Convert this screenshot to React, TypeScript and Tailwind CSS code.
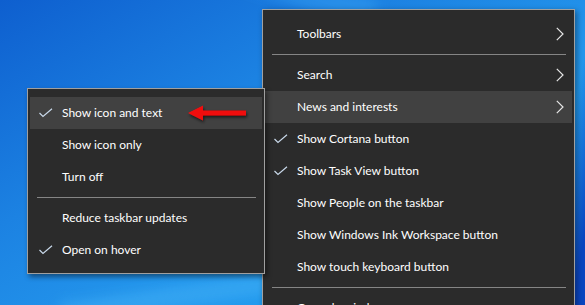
import clsx from "clsx";

type Entry = { label: string; checked?: boolean; arrow?: boolean; active?: boolean } | "sep";

const taskbarMenu: Entry[] = [
  { label: "Toolbars", arrow: true },
  "sep",
  { label: "Search", arrow: true },
  { label: "News and interests", arrow: true, active: true },
  { label: "Show Cortana button", checked: true },
  { label: "Show Task View button", checked: true },
  { label: "Show People on the taskbar" },
  { label: "Show Windows Ink Workspace button" },
  { label: "Show touch keyboard button" },
  "sep",
  { label: "Cascade windows" },
];

const newsMenu: Entry[] = [
  { label: "Show icon and text", checked: true, active: true },
  { label: "Show icon only" },
  { label: "Turn off" },
  "sep",
  { label: "Reduce taskbar updates" },
  { label: "Open on hover", checked: true },
];

function Check() {
  return (
    <svg width="14" height="10" viewBox="0 0 14 10" className="ml-[9px]">
      <path d="M0.5 5 L4 8.5 L13 0.8" fill="none" stroke="#c9d9ea" strokeWidth="1.2" />
    </svg>
  );
}

function Chevron() {
  return (
    <svg width="8" height="14" viewBox="0 0 8 14" className="ml-auto mr-[8px]">
      <path d="M0.8 0.8 L7 7 L0.8 13.2" fill="none" stroke="#e6e6e6" strokeWidth="1.2" />
    </svg>
  );
}

function Menu({ items }: { items: Entry[] }) {
  return (
    <div className="flex flex-col pt-[8px] pb-[7px]">
      {items.map((it, i) =>
        it === "sep" ? (
          <div key={i} className="flex h-[9px] shrink-0 items-center pl-[9px] pr-[8px]">
            <div className="h-px w-full bg-[#858585]" />
          </div>
        ) : (
          <div
            key={i}
            className={clsx("mx-[2px] flex h-8 shrink-0 items-center", it.active && "bg-[#414141]")}
          >
            <span className="flex w-[32px] shrink-0 items-center">{it.checked && <Check />}</span>
            <span className="whitespace-nowrap">{it.label}</span>
            {it.arrow && <Chevron />}
          </div>
        )
      )}
    </div>
  );
}

export default function App() {
  return (
    <div
      className="relative h-[305px] w-[585px] overflow-hidden bg-[linear-gradient(100deg,transparent_93%,#0a45c0_98%),linear-gradient(150deg,#0e5fcf_0%,#1c82e2_35%,#2396ec_60%,#1ba2f2_100%)] text-[12px] text-white"
      style={{ fontFamily: 'Lato, "Noto Sans", sans-serif' }}
    >
      {/* light beams on the wallpaper */}
      <div className="absolute left-[120px] top-[-40px] h-[30px] w-[260px] rotate-[18deg] bg-[#3aa6f5]/40 blur-[6px]" />
      <div className="absolute left-[60px] top-[285px] h-[20px] w-[260px] rotate-[-8deg] bg-[#4ab6f8]/40 blur-[6px]" />

      <div className="absolute left-[262px] top-[9px] h-[320px] w-[313px] border border-[#a0a0a0] bg-[#2b2b2b] shadow-[2px_2px_6px_rgba(0,0,0,0.4)]">
        <Menu items={taskbarMenu} />
      </div>

      <div className="absolute left-[27px] top-[88px] w-[238px] border border-[#a0a0a0] bg-[#2b2b2b] shadow-[2px_3px_5px_rgba(0,0,0,0.45)]">
        <Menu items={newsMenu} />
        {/* red arrow pointing at the highlighted option */}
        <svg width="64" height="24" viewBox="0 0 64 24" className="absolute left-[158px] top-[12px]">
          <defs>
            <filter id="sh" x="-20%" y="-50%" width="140%" height="200%">
              <feDropShadow dx="1" dy="2" stdDeviation="1.5" floodColor="#000" floodOpacity="0.6" />
            </filter>
          </defs>
          <path d="M2 12 L17 4.5 L17 9.5 L60 9.5 L60 14.5 L17 14.5 L17 19.5 Z" fill="#f00a0a" filter="url(#sh)" />
        </svg>
      </div>
    </div>
  );
}
